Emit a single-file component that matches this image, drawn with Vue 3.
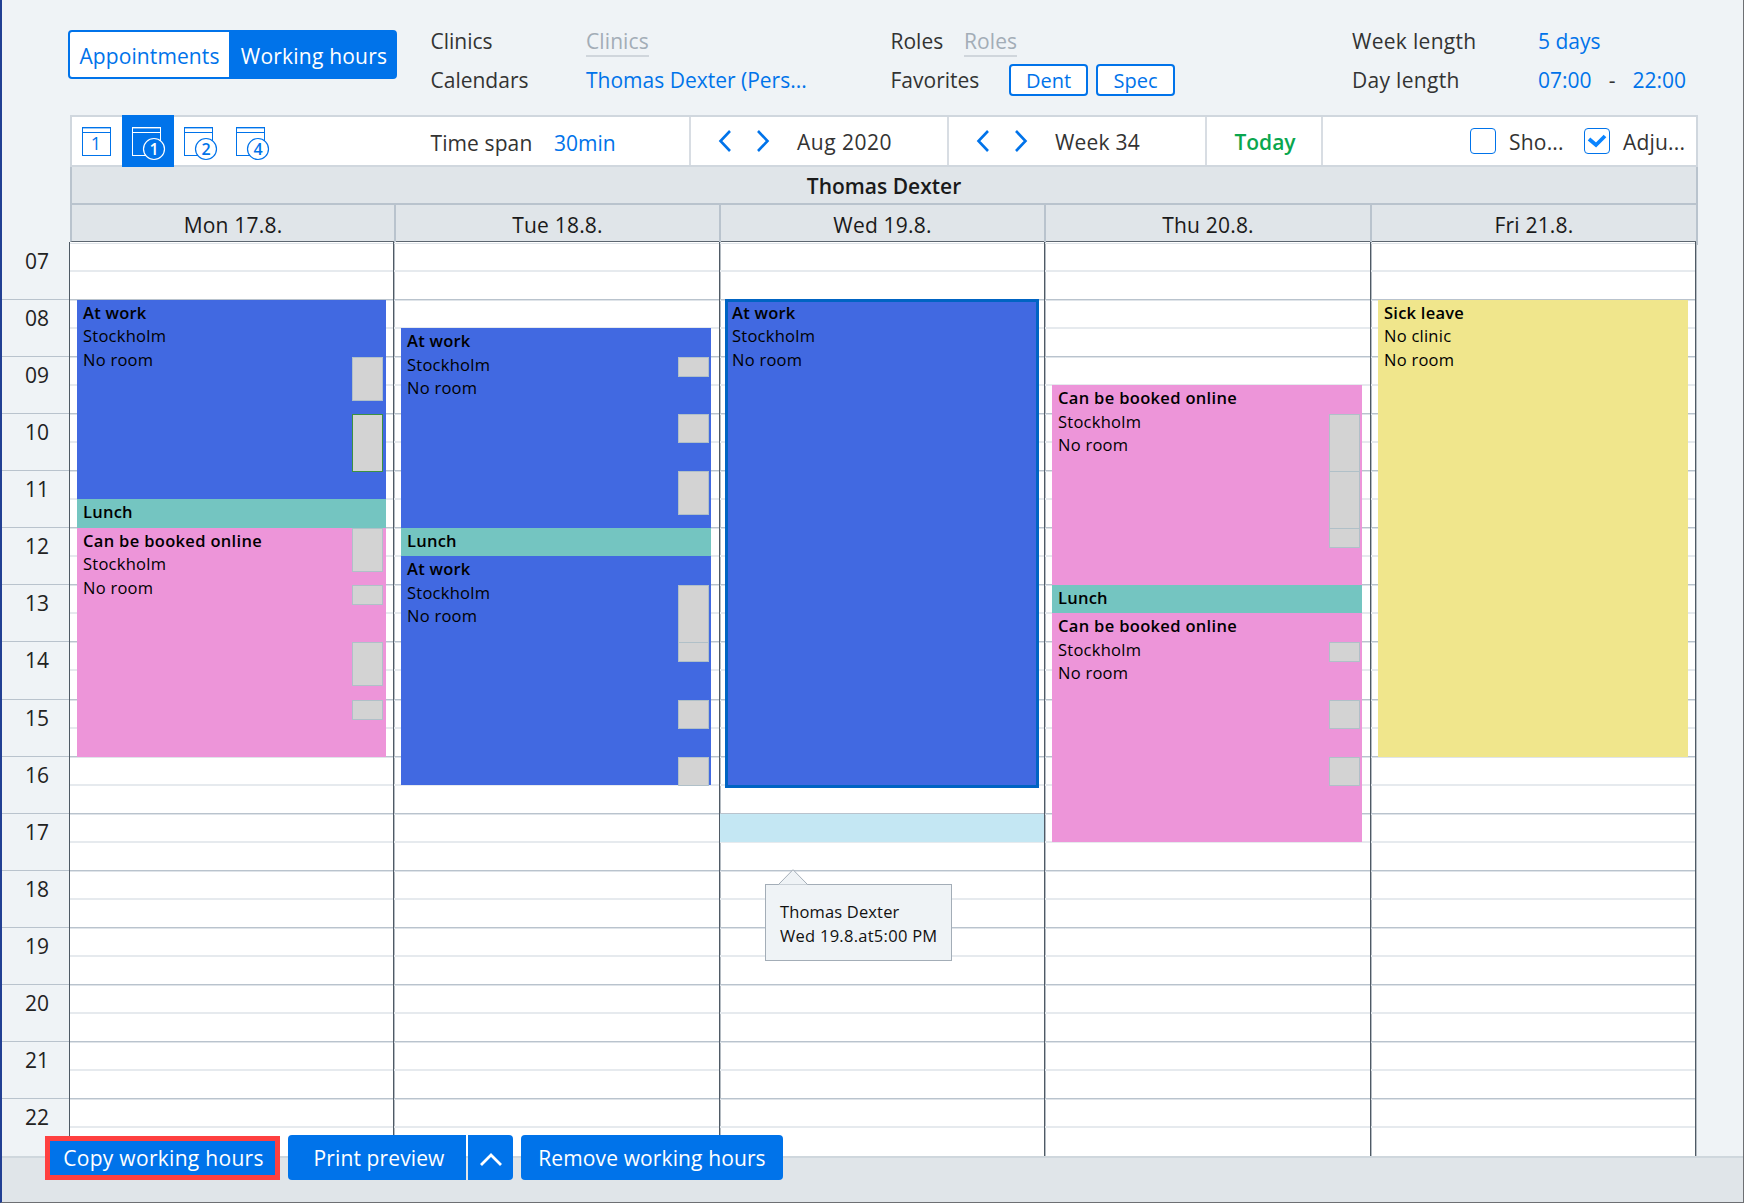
<template>
  <div class="window">
    <header class="filters">
      <div class="switch">
        <button class="switch-btn">Appointments</button>
        <button class="switch-btn active">Working hours</button>
      </div>
      <div class="group calendars">
        <div class="row">
          <span class="label">Clinics</span>
          <span class="placeholder">Clinics</span>
        </div>
        <div class="row">
          <span class="label">Calendars</span>
          <a class="link">Thomas Dexter (Pers...</a>
        </div>
      </div>
      <div class="group roles">
        <div class="row">
          <span class="label short">Roles</span>
          <span class="placeholder">Roles</span>
        </div>
        <div class="row">
          <span class="label fav">Favorites</span>
          <button v-for="fav in favorites" :key="fav" class="fav-btn">{{ fav }}</button>
        </div>
      </div>
      <div class="group lengths">
        <div class="row">
          <span class="label">Week length</span>
          <a class="link">5 days</a>
        </div>
        <div class="row">
          <span class="label">Day length</span>
          <a class="link">07:00</a>
          <span class="dash">-</span>
          <a class="link">22:00</a>
        </div>
      </div>
    </header>

    <div class="toolbar">
      <div class="views">
        <button
          v-for="view in views"
          :key="view.id"
          class="view-btn"
          :class="{ active: view.id === activeView }"
          @click="activeView = view.id"
        >
          <svg width="36" height="36" viewBox="0 0 36 36">
            <g fill="none" stroke="currentColor">
              <rect x="1.5" y="2.5" width="28" height="28" />
              <path d="M1 7.5H30" />
              <path d="M1 3.5H30" stroke-opacity="0.4" />
            </g>
            <text v-if="!view.badge" x="15" y="24.5" class="view-num">1</text>
            <template v-else>
              <circle class="badge" cx="23" cy="24" r="10.5" />
              <text x="23" y="29.5" class="badge-num">{{ view.badge }}</text>
            </template>
          </svg>
        </button>
      </div>
      <div class="cell span">
        <span class="label">Time span</span>
        <a class="link">30min</a>
      </div>
      <div class="cell period">
        <svg class="chevron" viewBox="0 0 14 22"><path d="M12 1L2.5 11L12 21" /></svg>
        <svg class="chevron" viewBox="0 0 14 22"><path d="M2 1L11.5 11L2 21" /></svg>
        <span class="period-label month">Aug 2020</span>
      </div>
      <div class="cell period">
        <svg class="chevron" viewBox="0 0 14 22"><path d="M12 1L2.5 11L12 21" /></svg>
        <svg class="chevron" viewBox="0 0 14 22"><path d="M2 1L11.5 11L2 21" /></svg>
        <span class="period-label">Week 34</span>
      </div>
      <div class="cell today">Today</div>
      <div class="cell checks">
        <span class="checkbox"></span>
        <span class="check-label">Sho...</span>
        <span class="checkbox">
          <svg width="20" height="16" viewBox="0 0 20 16"><path d="M2 6L9 12L18 3" /></svg>
        </span>
        <span class="check-label">Adju...</span>
      </div>
    </div>

    <div class="person">Thomas Dexter</div>
    <div class="days">
      <div v-for="day in days" :key="day.name" class="day-name">{{ day.name }}</div>
    </div>

    <main class="calendar">
      <div class="hours">
        <div v-for="hour in hours" :key="hour" class="hour">{{ hour }}</div>
      </div>
      <div class="columns">
        <div v-for="day in days" :key="day.name" class="column">
          <div v-for="hour in hours" :key="hour" class="slot"><div class="half"></div></div>
          <div v-if="day.hover" class="hover-slot" :style="place(day.hover, day.hover + 0.5)"></div>
          <div
            v-for="event in day.events"
            :key="event.start"
            class="event"
            :class="[event.kind, { selected: event.selected }]"
            :style="place(event.start, event.end)"
          >
            <div class="event-title">{{ titles[event.kind] }}</div>
            <template v-if="event.kind !== 'lunch'">
              <div>{{ event.clinic || 'Stockholm' }}</div>
              <div>No room</div>
            </template>
          </div>
          <div
            v-for="b in day.bookings"
            :key="b[0]"
            class="booking"
            :class="{ current: b[2] }"
            :style="place(b[0], b[1], 1)"
          ></div>
          <div v-if="day.hover" class="tooltip">
            <svg class="tip-arrow" width="30" height="16" viewBox="0 0 30 16">
              <path d="M0.5 15.5L15 0.7L29.5 15.5" />
            </svg>
            <div>Thomas Dexter</div>
            <div class="tip-time">Wed 19.8.at5:00 PM</div>
          </div>
        </div>
      </div>
    </main>

    <footer class="footer">
      <button class="action copy">Copy working hours</button>
      <button class="action print">Print preview</button>
      <button class="action more">
        <svg width="22" height="13" viewBox="0 0 22 13"><path d="M1 12L11 2L21 12" /></svg>
      </button>
      <button class="action remove">Remove working hours</button>
    </footer>
  </div>
</template>

<script setup>
import { ref } from 'vue';

const FIRST_HOUR = 7;
const HOUR_HEIGHT = 57;

const activeView = ref('week1');
const favorites = ['Dent', 'Spec'];

const views = [
  { id: 'day' },
  { id: 'week1', badge: 1 },
  { id: 'week2', badge: 2 },
  { id: 'week4', badge: 4 },
];

const titles = {
  work: 'At work',
  online: 'Can be booked online',
  lunch: 'Lunch',
  sick: 'Sick leave',
};

const hours = Array.from({ length: 16 }, (_, i) => String(i + FIRST_HOUR).padStart(2, '0'));

// bookings: [start, end, isCurrent], all times in decimal hours
const days = [
  {
    name: 'Mon 17.8.',
    events: [
      { kind: 'work', start: 8, end: 11.5 },
      { kind: 'lunch', start: 11.5, end: 12 },
      { kind: 'online', start: 12, end: 16 },
    ],
    bookings: [[9, 9.75], [10, 11, true], [12, 12.75], [13, 13.33], [14, 14.75], [15, 15.33]],
  },
  {
    name: 'Tue 18.8.',
    events: [
      { kind: 'work', start: 8.5, end: 12 },
      { kind: 'lunch', start: 12, end: 12.5 },
      { kind: 'work', start: 12.5, end: 16.5 },
    ],
    bookings: [[9, 9.33], [10, 10.5], [11, 11.75], [13, 14], [14, 14.33], [15, 15.5], [16, 16.5]],
  },
  {
    name: 'Wed 19.8.',
    events: [{ kind: 'work', start: 8, end: 16.5, selected: true }],
    bookings: [],
    hover: 17,
  },
  {
    name: 'Thu 20.8.',
    events: [
      { kind: 'online', start: 9.5, end: 13 },
      { kind: 'lunch', start: 13, end: 13.5 },
      { kind: 'online', start: 13.5, end: 17.5 },
    ],
    bookings: [[10, 11], [11, 12], [12, 12.33], [14, 14.33], [15, 15.5], [16, 16.5]],
  },
  {
    name: 'Fri 21.8.',
    events: [{ kind: 'sick', start: 8, end: 16, clinic: 'No clinic' }],
    bookings: [],
  },
];

// the 14:00 row is one pixel taller than the others
const offset = (time) => (time - FIRST_HOUR) * HOUR_HEIGHT + (time >= 15 ? 1 : 0);

const place = (start, end, extra = 0) => ({
  top: `${offset(start) + 0.9}px`,
  height: `${offset(end) - offset(start) + extra}px`,
});
</script>

<style>
body {
  margin: 0;
}
</style>

<style scoped>
.window {
  display: flex;
  flex-direction: column;
  box-sizing: border-box;
  width: 1744px;
  height: 1203px;
  overflow: hidden;
  background: #eff3f6;
  border-left: 2px solid #213f93;
  border-right: 1px solid #6d6f73;
  border-bottom: 1px solid #6d6f73;
  color: #333;
  font-family: "Open Sans", "Noto Sans", sans-serif;
  font-size: 21px;
  letter-spacing: 0;
  white-space: nowrap;
}
.window * {
  box-sizing: border-box;
}
button {
  padding: 0;
  font: inherit;
  letter-spacing: inherit;
  cursor: pointer;
}

/* filters */
.filters {
  display: flex;
  height: 115px;
  padding: 21px 0 0 66px;
}
.switch {
  display: flex;
  width: 329px;
  height: 49px;
  margin: 9px 33.5px 0 0;
  border: 2px solid #0073ea;
  border-radius: 4px;
  background: #fff;
}
.switch-btn {
  width: 159px;
  border: none;
  background: none;
  color: #0073ea;
  padding-top: 2px;
  letter-spacing: 0.1px;
}
.switch-btn.active {
  flex: 1;
  padding-left: 4px;
  background: #0073ea;
  color: #fff;
  letter-spacing: 0.2px;
}
.calendars {
  width: 460px;
}
.roles {
  width: 461.5px;
}
.row {
  display: flex;
  align-items: center;
  height: 39px;
}
.label {
  width: 155.5px;
}
.label.short {
  width: 73.5px;
}
.label.fav {
  width: 118.5px;
}
.calendars .label {
  letter-spacing: 0;
}
.lengths .label {
  width: 186px;
  letter-spacing: 0.3px;
}
.link {
  color: #0073ea;
}
.placeholder {
  height: 32px;
  line-height: 32px;
  color: #a3adb7;
  letter-spacing: 0.1px;
  border-bottom: 2px solid #d0d6dc;
}
.fav-btn {
  width: 79px;
  height: 32px;
  margin-right: 8px;
  border: 2px solid #0073ea;
  border-radius: 4px;
  background: #fff;
  color: #0073ea;
  font-size: 20px;
  line-height: 29px;
}
.dash {
  width: 41px;
  text-align: center;
}

/* toolbar */
.toolbar {
  display: flex;
  width: 1628px;
  height: 52px;
  margin-left: 68px;
  border: 2px solid #d0d7de;
  background: #fff;
}
.views {
  display: flex;
  width: 358.5px;
}
.view-btn {
  width: 52px;
  height: 52px;
  margin-top: -2px;
  padding: 4px 0 0 9px;
  border: none;
  background: none;
  color: #0073ea;
  text-align: left;
}
.view-btn:first-child {
  width: 50px;
}
.view-btn svg {
  display: block;
}
.view-btn.active {
  background: #0073ea;
  color: #fff;
}
.badge {
  fill: #fff;
  stroke: #0073ea;
  stroke-width: 1.2;
}
.active .badge {
  fill: #0073ea;
  stroke: #fff;
}
.view-num,
.badge-num {
  fill: currentColor;
  font-size: 18px;
  text-anchor: middle;
  letter-spacing: 0;
}
.badge-num {
  font-size: 16px;
  font-weight: 600;
}
.cell {
  display: flex;
  align-items: center;
  border-right: 2px solid #d8dde3;
}
.span {
  width: 260.5px;
  padding-top: 3px;
}
.span .label {
  width: 123.5px;
  letter-spacing: 0.1px;
}
.period {
  width: 258px;
  padding: 1px 0 0 27px;
}
.chevron {
  width: 14px;
  height: 22px;
  margin: 0 24px 2px 0;
  fill: none;
  stroke: #0073ea;
  stroke-width: 2.6;
}
.period-label {
  margin-left: 3px;
  letter-spacing: 0.2px;
}
.period-label.month {
  letter-spacing: 0.5px;
}
.today {
  width: 116px;
  padding: 1px 0 0 2px;
  justify-content: center;
  color: #0aa64e;
  font-weight: 600;
}
.checks {
  flex: 1;
  padding: 1px 0 0 147px;
  border-right: none;
}
.checkbox {
  display: flex;
  align-items: center;
  justify-content: center;
  width: 26px;
  height: 26px;
  margin-bottom: 2px;
  border: 1.5px solid #0073ea;
  border-radius: 4px;
}
.checkbox path {
  fill: none;
  stroke: #0a84ff;
  stroke-width: 3.8;
}
.check-label {
  width: 75px;
  margin-left: 13px;
  letter-spacing: 0.2px;
}
.check-label:last-child {
  width: auto;
}

/* calendar head */
.person {
  width: 1628px;
  height: 38px;
  margin-left: 68px;
  border: 2px solid #b9c3cd;
  border-top: none;
  background: #e0e5e9;
  color: #1a1a1a;
  font-weight: 600;
  line-height: 38px;
  text-align: center;
}
.days {
  display: grid;
  grid-template-columns: 324px 325px 325px 326px 1fr;
  width: 1628px;
  height: 37px;
  margin-left: 68px;
  border-left: 2px solid #b9c3cd;
  border-bottom: 1px solid #5c6670;
  background: #e0e5e9;
  color: #1a1a1a;
  line-height: 40px;
  text-align: center;
  letter-spacing: 0.2px;
}
.day-name {
  border-right: 2px solid #b9c3cd;
}

/* calendar body */
.calendar {
  display: flex;
  height: 914px;
}
.hours,
.column {
  display: grid;
  grid-template-rows: repeat(7, 57px) 58px repeat(7, 57px) 1fr;
}
.hours {
  width: 67px;
  color: #222;
}
.hour {
  padding-left: 23px;
  border-top: 1px solid #b9c3cd;
  line-height: 36px;
}
.hour:first-child,
.slot:first-child {
  border-top-color: transparent;
}
.columns {
  display: grid;
  grid-template-columns: 324px 326px 325px 326px 1fr;
  width: 1627px;
  background: #fff;
  border-left: 1px solid #4f5a65;
}
.column {
  position: relative;
  border-right: 1px solid #4f5a65;
  box-shadow: 1px 0 #b4bbc2;
}
.slot {
  border-top: 1px solid #b9c3cd;
  box-shadow: inset 0 1px #dfe4e9;
}
.half {
  height: 29px;
  border-bottom: 2px solid #e6eaee;
}
.event {
  position: absolute;
  left: 7px;
  width: 310px;
  padding: 0.8px 0 0 6px;
  color: #000;
  font-size: 16.5px;
  line-height: 23.5px;
  letter-spacing: 0.25px;
}
.column:first-child .event {
  width: 309px;
}
.event-title {
  font-weight: 600;
}
.online .event-title {
  letter-spacing: 0.33px;
}
.work {
  background: #4169e1;
}
.online {
  background: #ed95d9;
}
.lunch {
  background: #74c5c1;
}
.sick {
  background: #f0e68c;
}
.event.selected {
  box-sizing: content-box;
  left: 6px;
  width: 306px;
  padding-bottom: 0.5px;
  outline: 3px solid #0064c3;
  outline-offset: -2px;
}
.booking {
  position: absolute;
  right: 10px;
  width: 31px;
  border: 1px solid #b0c0c8;
  background: #d3d3d3;
}
.booking.current {
  border-color: #3d9140;
}
.hover-slot {
  position: absolute;
  left: 0;
  right: 0;
  background: #c4e7f3;
}
.tooltip {
  position: absolute;
  left: 45px;
  top: 642px;
  width: 187px;
  height: 77px;
  padding: 14.5px 0 0 14px;
  border: 1px solid #a3adb7;
  background: #eff3f6;
  color: #111;
  font-size: 16.5px;
  line-height: 24px;
  letter-spacing: 0.15px;
  z-index: 2;
}
.tip-time {
  letter-spacing: 0.27px;
}
.tip-arrow {
  position: absolute;
  left: 12px;
  top: -16px;
  fill: #eff3f6;
  stroke: #a3adb7;
}

/* footer */
.footer {
  display: flex;
  flex: 1;
  padding-left: 43px;
  border-top: 2px solid #cfd7dd;
  background: #e0e5e9;
}
.action {
  position: relative;
  z-index: 3;
  height: 45px;
  margin-top: -23px;
  border: none;
  border-radius: 4px;
  background: #0073ea;
  color: #fff;
  letter-spacing: 0.12px;
}
.copy {
  width: 235px;
  height: 44px;
  margin: -22px 8px 0 0;
  padding-left: 2px;
  border: 5px solid #ff4040;
  border-radius: 0;
  letter-spacing: 0.3px;
}
.print {
  width: 178px;
  margin-right: 2px;
  padding-left: 4px;
  border-radius: 4px 0 0 4px;
}
.more {
  width: 45px;
  margin-right: 8px;
  border-radius: 0 4px 4px 0;
}
.more path {
  fill: none;
  stroke: #fff;
  stroke-width: 2.8;
}
.remove {
  width: 262px;
}
</style>
